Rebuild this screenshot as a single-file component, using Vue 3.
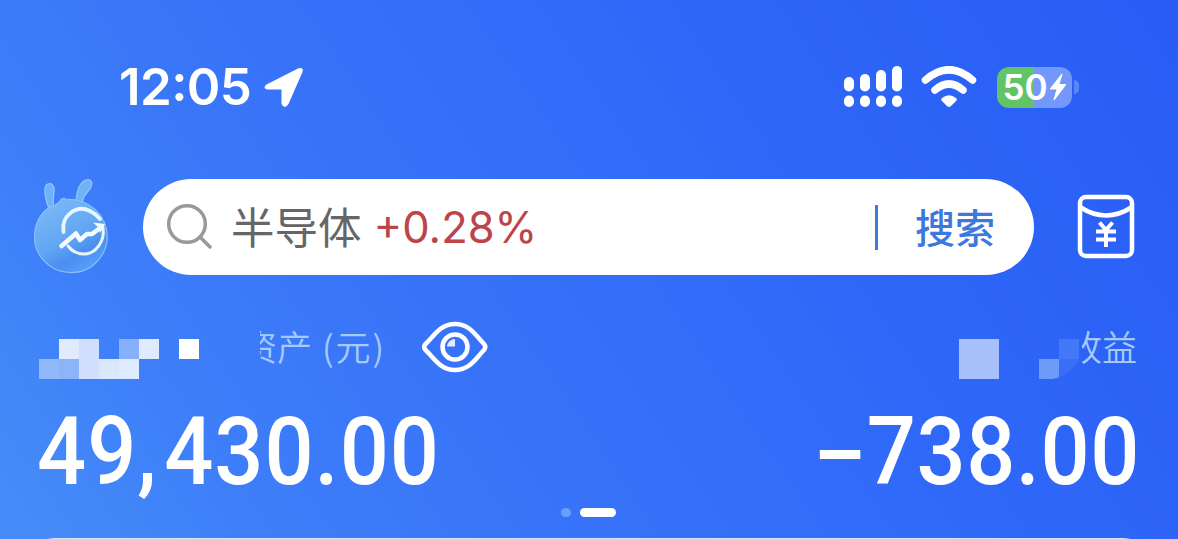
<template>
  <div class="home-header">
    <div class="status-bar">
      <div class="status-left">
        <span class="time">12<span class="colon">:</span>05</span>
        <svg class="location" width="40" height="40" viewBox="0 0 40 40">
          <path d="M2.500 17.500 34 1.500Q40-.5 38.500 5L24.500 37Q20.500 43 17.500 37V22.500H4Q-2 21.500 2.500 17.500Z" />
        </svg>
      </div>
      <div class="status-right">
        <svg class="signal" width="60" height="42" viewBox="0 0 60 42">
          <rect
            v-for="bar in bars"
            :key="bar.x"
            :x="bar.x"
            :y="bar.y"
            width="10"
            :height="25.5 - bar.y"
            rx="5"
          />
          <rect v-for="bar in bars" :key="'d' + bar.x" :x="bar.x" y="29.5" width="10" height="11.5" rx="5" />
        </svg>
        <svg class="wifi" width="56" height="42" viewBox="0 0 56 42">
          <path class="wave" d="M4.500 14Q28-6.500 51.500 14" />
          <path class="wave" d="M14 24Q28 12 42 24" />
          <path d="M28 41Q26.500 41 25 39L20.500 34.500Q19.500 33 21 32Q28 26.500 35 32Q36.500 33 35.500 34.500L31 39Q29.500 41 28 41Z" />
        </svg>
        <div class="battery">
          <span class="level">50</span>
          <svg width="18" height="28" viewBox="0 0 18 28">
            <path d="M12.500 1 1 15.500Q.5 16.500 1.500 16.500H7.500L4.500 26.500Q5 27.500 6 26.500L17 12Q17.500 11 16.500 11H10.500L13.500 1.500Q13.500.5 12.500 1Z" />
          </svg>
        </div>
        <i class="battery-cap"></i>
      </div>
    </div>

    <div class="search-row">
      <svg class="mascot" width="76" height="96" viewBox="0 0 76 96">
        <defs>
          <linearGradient id="body" x1="0.2" y1="0.1" x2="0.7" y2="1">
            <stop offset="0" stop-color="#79b6f6" />
            <stop offset="0.5" stop-color="#62a6f3" />
            <stop offset="0.75" stop-color="#4a8ff1" />
            <stop offset="1" stop-color="#5a9ff7" />
          </linearGradient>
        </defs>
        <path class="ear" d="M16 32C11 21 9 8 13 5.500C17 3 21 6 20 13C19 20 19 24 20 29Z" />
        <path class="ear" d="M42 22C43 10 47 2 53 .8C58 0 59 5 56 10C51 16 48 19 48.500 25Z" />
        <path class="body" d="M20 27Q25 24 27.500 20Q30 18.500 32 20.500Q45 20 55 26A36.300 36.300 0 1 1 17 27Q19 28 20 27Z" />
        <path class="ring" d="M29.500 53C27 37 42 25 56 32Q62 35 66 40" />
        <path class="ring thin" d="M69 49C71 62 62 75 50 75Q40 75 34 67" />
        <path class="trend" d="M27.500 67 42 54.500 46 61 53 55 58 55 68 47.500" />
        <path class="arrow" d="M59 43.500 71 45 66 54 65 49Z" />
      </svg>

      <div class="search-box">
        <svg class="magnifier" width="46" height="46" viewBox="0 0 46 46">
          <circle cx="21" cy="20" r="18.3" />
          <path d="M34 33 44 43" />
        </svg>
        <span class="keyword">半导体</span>
        <span class="change">+0.28%</span>
        <i class="divider"></i>
        <span class="search-btn">搜索</span>
      </div>

      <svg class="packet" width="58" height="66" viewBox="0 0 58 66">
        <rect x="3" y="3" width="52" height="59" rx="6" />
        <path d="M3 13Q29 30 55 13" />
        <path class="yen" d="M22.500 28.500 29 36 35.500 28.500M19 37.500H39M19 45.500H39M29 36V53" />
      </svg>
    </div>

    <div class="label-row">
      <svg class="mosaic" width="160" height="40" viewBox="0 0 160 40">
        <rect
          v-for="(b, i) in leftBlocks"
          :key="i"
          :x="b[0]"
          :y="b[1]"
          width="20"
          height="20"
          :fill="b[2]"
        />
      </svg>
      <span class="clip asset"><span>资</span></span>
      <span class="label">产</span>
      <span class="label unit">(元)</span>
      <svg class="eye" width="66" height="54" viewBox="0 0 66 54">
        <path d="M3.500 24C12 16 18 4 33 4S54 16 62 24Q64.500 27 62 30C54 38 48 50 33 50S12 38 3.500 30Q1 27 3.500 24Z" />
        <circle cx="33" cy="27" r="12.5" />
        <path class="glint" d="M25 26.500A8 8 0 0 1 33 19V26.500Z" />
      </svg>
      <svg class="mosaic right" width="120" height="40" viewBox="0 0 120 40">
        <rect width="40" height="40" fill="#a8c0fb" />
        <rect x="80" y="20" width="20" height="20" fill="#6e9bf9" />
        <rect x="100" width="20" height="20" fill="#4379f7" />
        <path d="M100 20H120Q113 35 94 40H100Z" fill="#386ff6" />
      </svg>
      <span class="clip income"><span>收</span></span>
      <span class="label">益</span>
    </div>

    <div class="amount-row">
      <span class="amount total">49<span class="comma">,</span>430.00</span>
      <span class="amount profit"><i class="minus"></i>738.00</span>
    </div>

    <div class="pager">
      <i class="dot"></i>
      <i class="dot active"></i>
    </div>

    <div class="next-card"></div>
  </div>
</template>

<script setup>
const bars = [
  { x: 1, y: 11 },
  { x: 17, y: 8 },
  { x: 33, y: 4 },
  { x: 49, y: 0 }
]

// x, y, color
const leftBlocks = [
  [20, 0, '#e2ebfe'],
  [40, 0, '#cfdffd'],
  [80, 0, '#86b0fa'],
  [100, 0, '#e0eafe'],
  [140, 0, '#ffffff'],
  [0, 20, '#90b8fa'],
  [20, 20, '#8cb4fa'],
  [40, 20, '#cfdffd'],
  [60, 20, '#dae7fd'],
  [80, 20, '#deebfe']
]
</script>

<style>
body {
  margin: 0;
}
</style>

<style scoped>
.home-header {
  width: 1178px;
  height: 539px;
  overflow: hidden;
  display: flex;
  flex-direction: column;
  background: linear-gradient(56deg, #478df8 0%, #3e7ff8 17%, #3874f8 36%, #2f68f8 66%, #285cf5 100%);
  font-family: Inter, "Noto Sans CJK SC", sans-serif;
  color: #fff;
}

.home-header > div {
  flex-shrink: 0;
}

svg {
  display: block;
  flex-shrink: 0;
}

.status-bar {
  height: 174px;
  padding: 0 101px 0 119px;
  box-sizing: border-box;
  display: flex;
  align-items: center;
  justify-content: space-between;
}

.status-left,
.status-right {
  display: flex;
  align-items: center;
}

.time {
  font-size: 51px;
  font-weight: 600;
  line-height: 60px;
  letter-spacing: -0.6px;
}

.colon {
  position: relative;
  top: -4px;
}

.location {
  margin-left: 13px;
  fill: #fff;
}

.signal,
.wifi {
  fill: #fff;
}

.wifi {
  margin-left: 18px;
}

.wave {
  fill: none;
  stroke: #fff;
  stroke-width: 7.5;
  stroke-linecap: round;
}

.battery {
  margin-left: 20px;
  width: 75px;
  height: 41px;
  border-radius: 12px;
  background: linear-gradient(90deg, #62c466 50%, #7398fa 50%);
  display: flex;
  align-items: center;
  justify-content: center;
}

.battery svg {
  fill: #fff;
  margin-left: 1px;
}

.level {
  font-size: 35px;
  font-weight: 600;
  line-height: 40px;
}

.battery-cap {
  width: 5px;
  height: 14px;
  margin-left: 2px;
  margin-right: -2px;
  border-radius: 0 6px 6px 0;
  background: #5b86f8;
}

.search-row {
  height: 96px;
  margin-top: 5px;
  padding: 0 43px 0 34px;
  display: flex;
  align-items: center;
}

.ear {
  fill: #70b2f7;
  stroke: #94c5fb;
  stroke-width: 1.2;
}

.body {
  fill: url(#body);
  stroke: #88bdfb;
  stroke-width: 1.2;
}

.ring {
  fill: none;
  stroke: #e6f7ff;
  stroke-width: 3.8;
  stroke-linecap: round;
}

.ring.thin {
  stroke-width: 3;
}

.trend {
  fill: none;
  stroke: #f4fdff;
  stroke-width: 4.5;
  stroke-linecap: round;
  stroke-linejoin: round;
}

.arrow {
  fill: #f4fdff;
}

.search-box {
  width: 891px;
  height: 96px;
  box-sizing: border-box;
  margin-left: 33px;
  padding: 0 39px 0 23px;
  border-radius: 48px;
  background: #fff;
  display: flex;
  align-items: center;
}

.magnifier {
  fill: none;
  stroke: #999;
  stroke-width: 3.5;
  stroke-linecap: round;
}

.keyword {
  margin-left: 19px;
  margin-bottom: 3px;
  font-family: "Noto Sans CJK SC", sans-serif;
  font-size: 43.5px;
  line-height: 60px;
  color: #666;
}

.change {
  margin-left: 12px;
  font-size: 43.5px;
  line-height: 60px;
  color: #bd4449;
}

.divider {
  width: 3px;
  height: 45px;
  margin-left: auto;
  background: #4379d9;
}

.search-btn {
  margin-left: 37px;
  margin-bottom: 2px;
  font-family: "Noto Sans CJK SC", sans-serif;
  font-size: 40px;
  font-weight: 500;
  line-height: 60px;
  color: #3c78de;
}

.packet {
  margin-left: 43px;
  fill: none;
  stroke: #fff;
  stroke-width: 4.5;
}

.yen {
  stroke-width: 4;
}

.label-row {
  height: 56px;
  margin-top: 45px;
  padding: 0 41px 0 39px;
  display: flex;
  align-items: center;
  font-family: "Noto Sans CJK SC", sans-serif;
  font-size: 35px;
  font-weight: 350;
  line-height: 50px;
  color: #a5cafc;
}

.mosaic {
  margin-top: 22px;
}

.label,
.clip {
  margin-bottom: 4px;
}

.clip {
  display: flex;
  justify-content: flex-end;
  overflow: hidden;
}

.asset {
  width: 17px;
  margin-left: 61px;
}

.unit {
  margin-left: 10px;
  letter-spacing: 2px;
}

.eye {
  margin-left: 36px;
  margin-bottom: 2px;
  fill: none;
  stroke: #fff;
  stroke-width: 4.5;
}

.glint {
  fill: #e3edff;
  stroke: none;
}

.mosaic.right {
  margin-left: auto;
}

.income {
  width: 20px;
  margin-left: 3px;
}

.amount-row {
  height: 110px;
  margin-top: 21px;
  padding: 0 40px 0 37px;
  display: flex;
  align-items: center;
  justify-content: space-between;
}

.amount {
  display: flex;
  align-items: center;
  font-family: Roboto, sans-serif;
  font-size: 94px;
  font-weight: 500;
  line-height: 110px;
  letter-spacing: 1.1px;
}

.total {
  transform: scaleX(0.92);
  transform-origin: left;
}

.comma {
  margin-right: 7px;
}

.profit {
  margin-right: -2px;
  letter-spacing: 0.6px;
  transform: scaleX(0.92);
  transform-origin: right;
}

.minus {
  width: 44px;
  height: 9px;
  margin-right: 7px;
  margin-top: 4px;
  background: #fff;
}

.pager {
  height: 9px;
  margin-top: 1px;
  padding-left: 561px;
  display: flex;
  gap: 9px;
}

.dot {
  width: 10px;
  height: 9px;
  border-radius: 5px;
  background: #6c9dfb;
}

.dot.active {
  width: 36px;
  background: #fff;
}

.next-card {
  height: 80px;
  margin: 21px 20px 0;
  border-radius: 36px 36px 0 0;
  background: #d5e8ff;
}
</style>
